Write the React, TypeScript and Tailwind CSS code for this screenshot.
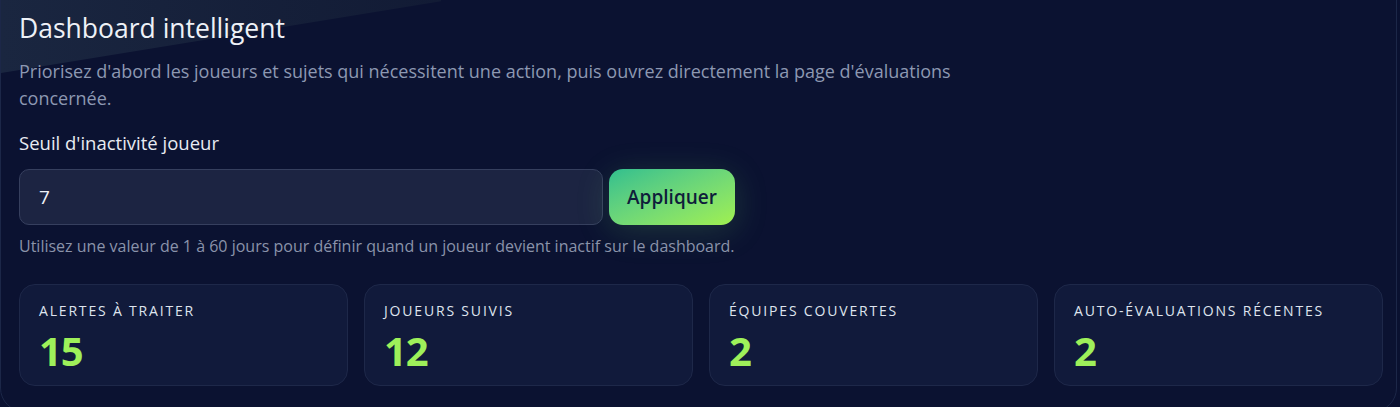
import React, { useState } from 'react';

const stats = [
  { label: 'Alertes à traiter', value: 15 },
  { label: 'Joueurs suivis', value: 12 },
  { label: 'Équipes couvertes', value: 2 },
  { label: 'Auto-évaluations récentes', value: 2 },
];

const font = { fontFamily: '"Open Sans", "Noto Sans", sans-serif' };

const StatCard = ({ label, value }) => (
  <div className="h-[102px] rounded-[16px] border border-[#1e2849] bg-[#111a3b] px-[19px] pt-[17px]">
    <div className="text-[14px] font-medium uppercase leading-[18px] tracking-[0.13em] text-[#dfe4ee]">
      {label}
    </div>
    <div className="mt-[11px] text-[40px] font-bold leading-[40px] tracking-[-0.03em] text-[#9ef05a]">{value}</div>
  </div>
);

const App = () => {
  const [threshold, setThreshold] = useState('7');

  return (
    <div className="h-[407px] w-[1400px] overflow-hidden bg-[#0a1130]" style={font}>
      <div className="relative mt-[-40px] h-[452px] w-[1397px] overflow-hidden rounded-[24px] border border-[#1c2748] bg-[#0b1231] pl-[18px] pr-[13px] pt-[51px]">
        {/* diagonal sheen top-left */}
        <div className="pointer-events-none absolute left-0 top-0 h-[112px] w-[440px] bg-gradient-to-r from-[#1a2640] to-[#121b35] [clip-path:polygon(0_0,100%_0,100%_36%,0_100%)]" />

        <div className="relative">
          <h1 className="text-[26.5px] font-normal leading-[32px] text-[#eef1f7]">Dashboard intelligent</h1>
          <p className="mt-[14px] max-w-[980px] text-[18px] leading-[27px] text-[#8d98b2]">
            Priorisez d'abord les joueurs et sujets qui nécessitent une action, puis ouvrez directement la page d'évaluations concernée.
          </p>

          <label className="mt-[19px] block text-[18.5px] leading-[24px] text-[#e8ebf2]">Seuil d'inactivité joueur</label>
          <div className="mt-[14px] flex gap-[6px]">
            <input
              type="text"
              value={threshold}
              onChange={(e) => setThreshold(e.target.value)}
              className="h-[56px] w-[584px] rounded-[10px] border border-[#363f5e] bg-[#1c2442] px-[19px] text-[19px] text-[#eef1f7] outline-none"
              style={font}
            />
            <button
              className="h-[56px] w-[126px] rounded-[14px] bg-gradient-to-br from-[#2fbf8e] to-[#a0f04e] text-[19px] font-semibold text-[#0f1d3b] shadow-[0_6px_34px_rgba(110,220,110,0.18)]"
              style={font}
            >
              Appliquer
            </button>
          </div>
          <p className="mt-[10px] text-[16px] leading-[22px] text-[#8a93aa]">
            Utilisez une valeur de 1 à 60 jours pour définir quand un joueur devient inactif sur le dashboard.
          </p>

          <div className="mt-[27px] grid w-[1364px] grid-cols-4 gap-[16px]">
            {stats.map((s) => (
              <StatCard key={s.label} label={s.label} value={s.value} />
            ))}
          </div>
        </div>
      </div>
    </div>
  );
};

export default App;
